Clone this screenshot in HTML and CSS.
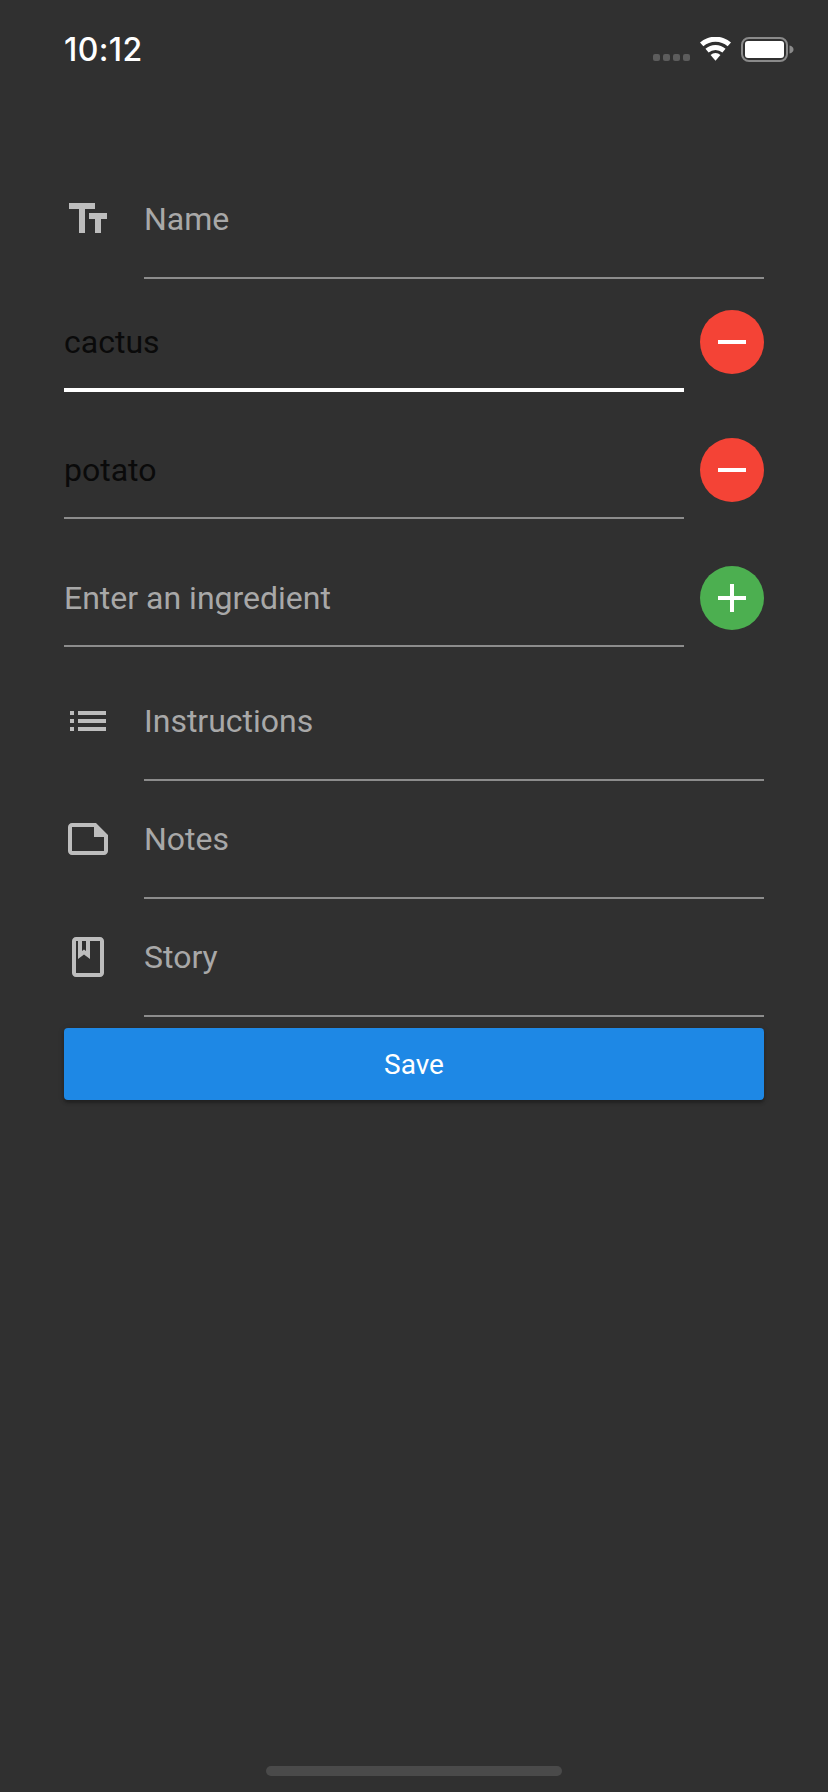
FILE: index.html
```html
<!DOCTYPE html>
<html lang="en">
<head>
    <meta charset="UTF-8">
    <meta name="viewport" content="width=device-width, initial-scale=1.0">
    <title>New Recipe</title>
    <link rel="stylesheet" href="styles.css">
</head>
<body>
    <div id="content">
        <header class="status">
            <span class="hora">10:12</span>
            <div class="status-icones">
                <svg class="sinal" width="37" height="7" viewBox="0 0 37 7">
                    <rect x="0" y="0" width="7" height="7" rx="2"/>
                    <rect x="10" y="0" width="7" height="7" rx="2"/>
                    <rect x="20" y="0" width="7" height="7" rx="2"/>
                    <rect x="30" y="0" width="7" height="7" rx="2"/>
                </svg>
                <svg class="wifi" width="31" height="24" viewBox="0.3 0 31.4 24">
                    <path d="M16 24l-5-6a7.5 7.5 0 0 1 10 0z"/>
                    <path d="M9 15.500l-3.200-3.700a15.500 15.500 0 0 1 20.400 0L23 15.500a10.700 10.700 0 0 0-14 0z"/>
                    <path d="M3.700 9.300L0.300 5.500a23.500 23.500 0 0 1 31.400 0l-3.400 3.800a18.500 18.500 0 0 0-24.600 0z"/>
                </svg>
                <svg class="bateria" width="54" height="26" viewBox="0 0 54 26">
                    <rect x="2" y="1" width="45" height="23" rx="7" fill="none" stroke="#8a8a8a" stroke-width="2"/>
                    <rect x="5" y="4" width="39" height="17" rx="3" fill="#fff"/>
                    <path d="M49.500 8.500c2.500.5 4 2 4 4s-1.500 3.500-4 4z" fill="#8a8a8a"/>
                </svg>
            </div>
        </header>

        <main class="form">
            <div class="campo">
                <svg class="icone" viewBox="0 0 24 24"><path d="M2.500 4v3h5v12h3V7h5V4h-13zm19 5h-9v3h3v7h3v-7h3V9z"/></svg>
                <div class="entrada vazia">Name</div>
            </div>

            <div class="ingrediente">
                <div class="caixa foco">cactus</div>
                <button class="redondo vermelho"><svg viewBox="0 0 24 24"><path d="M19 13H5v-2h14v2z"/></svg></button>
            </div>
            <div class="ingrediente">
                <div class="caixa">potato</div>
                <button class="redondo vermelho"><svg viewBox="0 0 24 24"><path d="M19 13H5v-2h14v2z"/></svg></button>
            </div>
            <div class="ingrediente">
                <div class="caixa vazia">Enter an ingredient</div>
                <button class="redondo verde"><svg viewBox="0 0 24 24"><path d="M19 13h-6v6h-2v-6H5v-2h6V5h2v6h6v2z"/></svg></button>
            </div>

            <div class="campo">
                <svg class="icone" viewBox="0 0 24 24"><path d="M3 13h2v-2H3v2zm0 4h2v-2H3v2zm0-8h2V7H3v2zm4 4h14v-2H7v2zm0 4h14v-2H7v2zM7 7v2h14V7H7z"/></svg>
                <div class="entrada vazia">Instructions</div>
            </div>
            <div class="campo">
                <svg class="icone" viewBox="0 0 24 24"><path d="M16 4H4c-1.100 0-2 .9-2 2v12.010c0 1.100.9 1.990 2 1.990h16c1.100 0 2-.89 2-1.990V10l-6-6zM4 18.010V6h11v5h5v7.010H4z"/></svg>
                <div class="entrada vazia">Notes</div>
            </div>
            <div class="campo">
                <svg class="icone" viewBox="0 0 24 24"><path d="M18 2H6c-1.100 0-2 .9-2 2v16c0 1.100.9 2 2 2h12c1.100 0 2-.9 2-2V4c0-1.100-.9-2-2-2zM9 4h2v5l-1-.75L9 9V4zm9 16H6V4h1v9l3-2.250L13 13V4h5v16z"/></svg>
                <div class="entrada vazia">Story</div>
            </div>

            <button class="salvar">Save</button>
        </main>

        <footer class="barra-home"></footer>
    </div>
</body>
</html>
```

FILE: styles.css
```css
*{
    margin: 0;
    box-sizing: border-box;
}
:root{
    --fundo:#303030;
    --linha:#8c8c8c;
    --vazio:#a8a8a8;
    --icone:#bdbdbd;
}
html, body{
    background-color: var(--fundo);
    height: 100%;
}
#content{
    display: flex;
    flex-direction: column;
    height: 1792px;
    font-family: Roboto, sans-serif;
}

/* barra de status */
.status{
    display: flex;
    justify-content: space-between;
    height: 161px;
    padding: 30px 34px 0 64px;
}
.hora{
    color: white;
    font-family: Inter, sans-serif;
    font-size: 32px;
    font-weight: 500;
    line-height: 40px;
    letter-spacing: 0.4px;
}
.status-icones{
    display: flex;
    align-items: flex-start;
    height: 40px;
    padding-top: 7px;
}
.sinal{
    fill: #5c5c5c;
    margin: 17px 10px 0 0;
}
.wifi{
    fill: white;
    margin-right: 9px;
}

/* formulario */
.form{
    display: flex;
    flex-direction: column;
    padding: 0 64px;
}
.campo{
    display: flex;
    align-items: flex-start;
    height: 118px;
}
.icone{
    width: 48px;
    height: 48px;
    flex: none;
    margin: 34px 32px 0 0;
    fill: var(--icone);
}
.entrada{
    flex: auto;
    padding: 39px 0;
    height: 118px;
    font-size: 32px;
    line-height: 38px;
    border-bottom: 2px solid var(--linha);
}
.vazia{
    color: var(--vazio);
}
.ingrediente{
    display: flex;
    align-items: flex-start;
    gap: 16px;
    height: 128px;
    padding-top: 31px;
}
.caixa{
    flex: auto;
    padding: 13px 0 28px;
    font-size: 32px;
    line-height: 38px;
    color: #0a0a0a;
    border-bottom: 2px solid var(--linha);
}
.caixa.vazia{
    color: var(--vazio);
}
.foco{
    padding-bottom: 27px;
    border-bottom: 4px solid white;
}
.redondo{
    display: grid;
    place-items: center;
    flex: none;
    width: 64px;
    height: 64px;
    padding: 0;
    border: none;
    border-radius: 50%;
}
.redondo svg{
    width: 48px;
    height: 48px;
    fill: white;
}
.vermelho{
    background-color: #f44336;
}
.verde{
    background-color: #4caf50;
}
.salvar{
    height: 72px;
    margin-top: 11px;
    border: none;
    border-radius: 4px;
    background-color: #1e88e5;
    color: white;
    font: 400 28px Roboto, sans-serif;
    box-shadow: 0 3px 3px rgba(0, 0, 0, 0.25), 0 1px 6px rgba(0, 0, 0, 0.15);
}

.barra-home{
    width: 296px;
    height: 10px;
    margin: auto auto 16px;
    border-radius: 5px;
    background-color: #4a4a4a;
}
```
